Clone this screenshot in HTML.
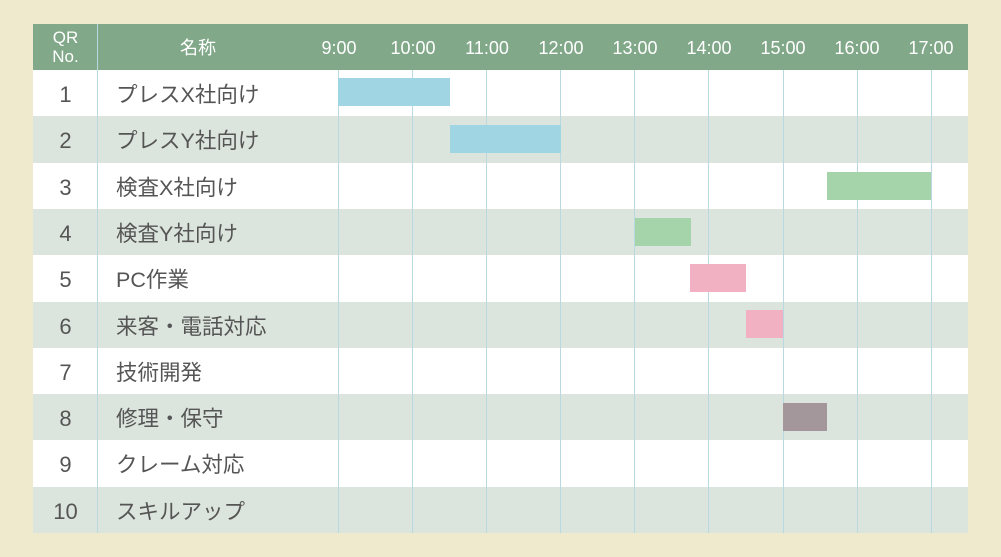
<!DOCTYPE html>
<html><head><meta charset="utf-8"><style>
body{margin:0;width:1001px;height:557px;background:#efeacd;position:relative;overflow:hidden;font-family:"Liberation Sans","Noto Sans CJK JP",sans-serif}
div{position:absolute;box-sizing:border-box}
.hdr{left:33px;top:24px;width:935px;height:46px;background:#81a888}
.h{color:#fff;font-size:18px;text-align:center;top:24px;height:46px;line-height:48px;width:80px;margin-left:-40px}
.r{left:33px;width:935px}
.n{left:33px;width:65px;text-align:center;color:#555;font-size:22px;height:46px;line-height:50px}
.t{left:116px;color:#555;font-size:21.5px;height:46px;line-height:50px;white-space:nowrap}
.v{width:1px;top:70px;height:463px;background:#b9d8df}
.b{height:28px}
</style></head><body>
<div class="hdr"></div>
<div style="left:33px;width:65px;top:28px;line-height:19px;color:#fff;font-size:17px;text-align:center">QR<br>No.</div>
<div class="h" style="left:198px">名称</div>
<div class="h" style="left:339px">9:00</div>
<div class="h" style="left:413px">10:00</div>
<div class="h" style="left:487px">11:00</div>
<div class="h" style="left:561px">12:00</div>
<div class="h" style="left:635px">13:00</div>
<div class="h" style="left:709px">14:00</div>
<div class="h" style="left:783px">15:00</div>
<div class="h" style="left:857px">16:00</div>
<div class="h" style="left:931px">17:00</div>

<div class="r" style="top:70px;height:46px;background:#fff"></div>
<div class="r" style="top:116px;height:47px;background:#dce5dd"></div>
<div class="r" style="top:163px;height:46px;background:#fff"></div>
<div class="r" style="top:209px;height:46px;background:#dce5dd"></div>
<div class="r" style="top:255px;height:47px;background:#fff"></div>
<div class="r" style="top:302px;height:46px;background:#dce5dd"></div>
<div class="r" style="top:348px;height:46px;background:#fff"></div>
<div class="r" style="top:394px;height:46px;background:#dce5dd"></div>
<div class="r" style="top:440px;height:47px;background:#fff"></div>
<div class="r" style="top:487px;height:46px;background:#dce5dd"></div>

<div class="v" style="left:97px;top:24px;height:509px;background:#b9d8df"></div>
<div class="v" style="left:338px"></div><div class="v" style="left:412px"></div><div class="v" style="left:486px"></div><div class="v" style="left:560px"></div><div class="v" style="left:634px"></div><div class="v" style="left:708px"></div><div class="v" style="left:783px"></div><div class="v" style="left:857px"></div><div class="v" style="left:931px"></div>

<div class="b" style="left:338px;top:78px;width:112px;background:#a0d6e3"></div>
<div class="b" style="left:450px;top:125px;width:111px;background:#a0d6e3"></div>
<div class="b" style="left:827px;top:172px;width:104px;background:#a6d4aa"></div>
<div class="b" style="left:635px;top:218px;width:56px;background:#a6d4aa"></div>
<div class="b" style="left:690px;top:264px;width:56px;background:#f2b1c2"></div>
<div class="b" style="left:746px;top:310px;width:37px;background:#f2b1c2"></div>
<div class="b" style="left:783px;top:403px;width:44px;background:#a4979c"></div>

<div class="n" style="top:70px">1</div><div class="t" style="top:70px">プレスX社向け</div>
<div class="n" style="top:116px">2</div><div class="t" style="top:116px">プレスY社向け</div>
<div class="n" style="top:163px">3</div><div class="t" style="top:163px">検査X社向け</div>
<div class="n" style="top:209px">4</div><div class="t" style="top:209px">検査Y社向け</div>
<div class="n" style="top:255px">5</div><div class="t" style="top:255px">PC作業</div>
<div class="n" style="top:302px">6</div><div class="t" style="top:302px">来客・電話対応</div>
<div class="n" style="top:348px">7</div><div class="t" style="top:348px">技術開発</div>
<div class="n" style="top:394px">8</div><div class="t" style="top:394px">修理・保守</div>
<div class="n" style="top:440px">9</div><div class="t" style="top:440px">クレーム対応</div>
<div class="n" style="top:487px">10</div><div class="t" style="top:487px">スキルアップ</div>
</body></html>
